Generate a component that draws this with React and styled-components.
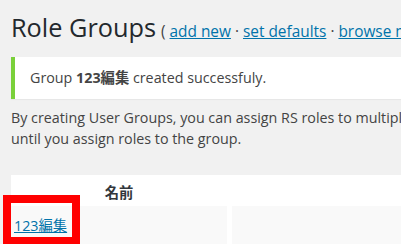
import React from "react";
import styled, { createGlobalStyle } from "styled-components";

const Global = createGlobalStyle`
	html, body {
		margin: 0;
		padding: 0;
		background: #f1f1f1;
		overflow: hidden;
	}
	body {
		font-family: "Open Sans", "Noto Sans CJK JP", sans-serif;
		color: #444444;
	}
`;

const Wrap = styled.div`
	width: 640px;
	height: 244px;
	padding: 0 0 0 11px;
`;

const Title = styled.h1`
	margin: 0;
	padding: 10px 0 0;
	height: 34px;
	font-size: 25.3px;
	font-weight: 400;
	line-height: 34px;
	color: #23282d;
	white-space: nowrap;
`;

const Actions = styled.span`
	margin-left: 5px;
	font-size: 15.4px;
	line-height: 1;
	color: #444444;
`;

const Link = styled.a`
	color: #0073aa;
	text-decoration: underline;
	cursor: pointer;
`;

const Sep = styled.span`
	margin: 0 4px;
`;

const Notice = styled.div`
	margin: 13px 0 0;
	padding: 0 12px 0 15px;
	background: #ffffff;
	border-left: 4px solid #7ad03a;
	box-shadow: 0 1px 1px rgba(0, 0, 0, 0.04);
	font-size: 14.3px;
	p {
		margin: 0;
		padding: 10px 0 11px;
		line-height: 21px;
	}
	strong {
		font-weight: 700;
	}
`;

const Intro = styled.p`
	margin: 8px 0 0;
	font-size: 14.3px;
	line-height: 21px;
	white-space: nowrap;
`;

const Table = styled.div`
	position: relative;
	margin-top: 26px;
	background: #ffffff;
`;

const HeadRow = styled.div`
	display: grid;
	grid-template-columns: 216px 1fr;
	height: 31px;
`;

const HeadCell = styled.div`
	display: flex;
	align-items: center;
	justify-content: center;
	padding-top: 1px;
	font-size: 14.3px;
	font-weight: 700;
	color: #32373c;
`;

const Row = styled.div`
	display: grid;
	grid-template-columns: 216px 1fr;
	column-gap: 5px;
	height: 50px;
`;

const Cell = styled.div`
	background: #f9f9f9;
	padding: 9px 3px;
	font-size: 14.3px;
	line-height: 22px;
`;

const Marker = styled.div`
	position: absolute;
	left: -8px;
	top: 20px;
	width: 61px;
	height: 34px;
	border: 8px solid #ff0000;
	pointer-events: none;
`;

export default function App() {
	return (
		<Wrap>
			<Global />
			<Title>
				Role Groups
				<Actions>
					(&nbsp;<Link>add new</Link>
					<Sep>·</Sep>
					<Link>set defaults</Link>
					<Sep>·</Sep>
					<Link>browse members</Link> )
				</Actions>
			</Title>
			<Notice>
				<p>
					Group <strong>123編集</strong> created successfuly.
				</p>
			</Notice>
			<Intro>
				By creating User Groups, you can assign RS roles to multiple users at once. Members
				<br />
				until you assign roles to the group.
			</Intro>
			<Table>
				<HeadRow>
					<HeadCell>名前</HeadCell>
					<HeadCell />
				</HeadRow>
				<Row>
					<Cell>
						<Link>123編集</Link>
					</Cell>
					<Cell />
				</Row>
				<Marker />
			</Table>
		</Wrap>
	);
}
